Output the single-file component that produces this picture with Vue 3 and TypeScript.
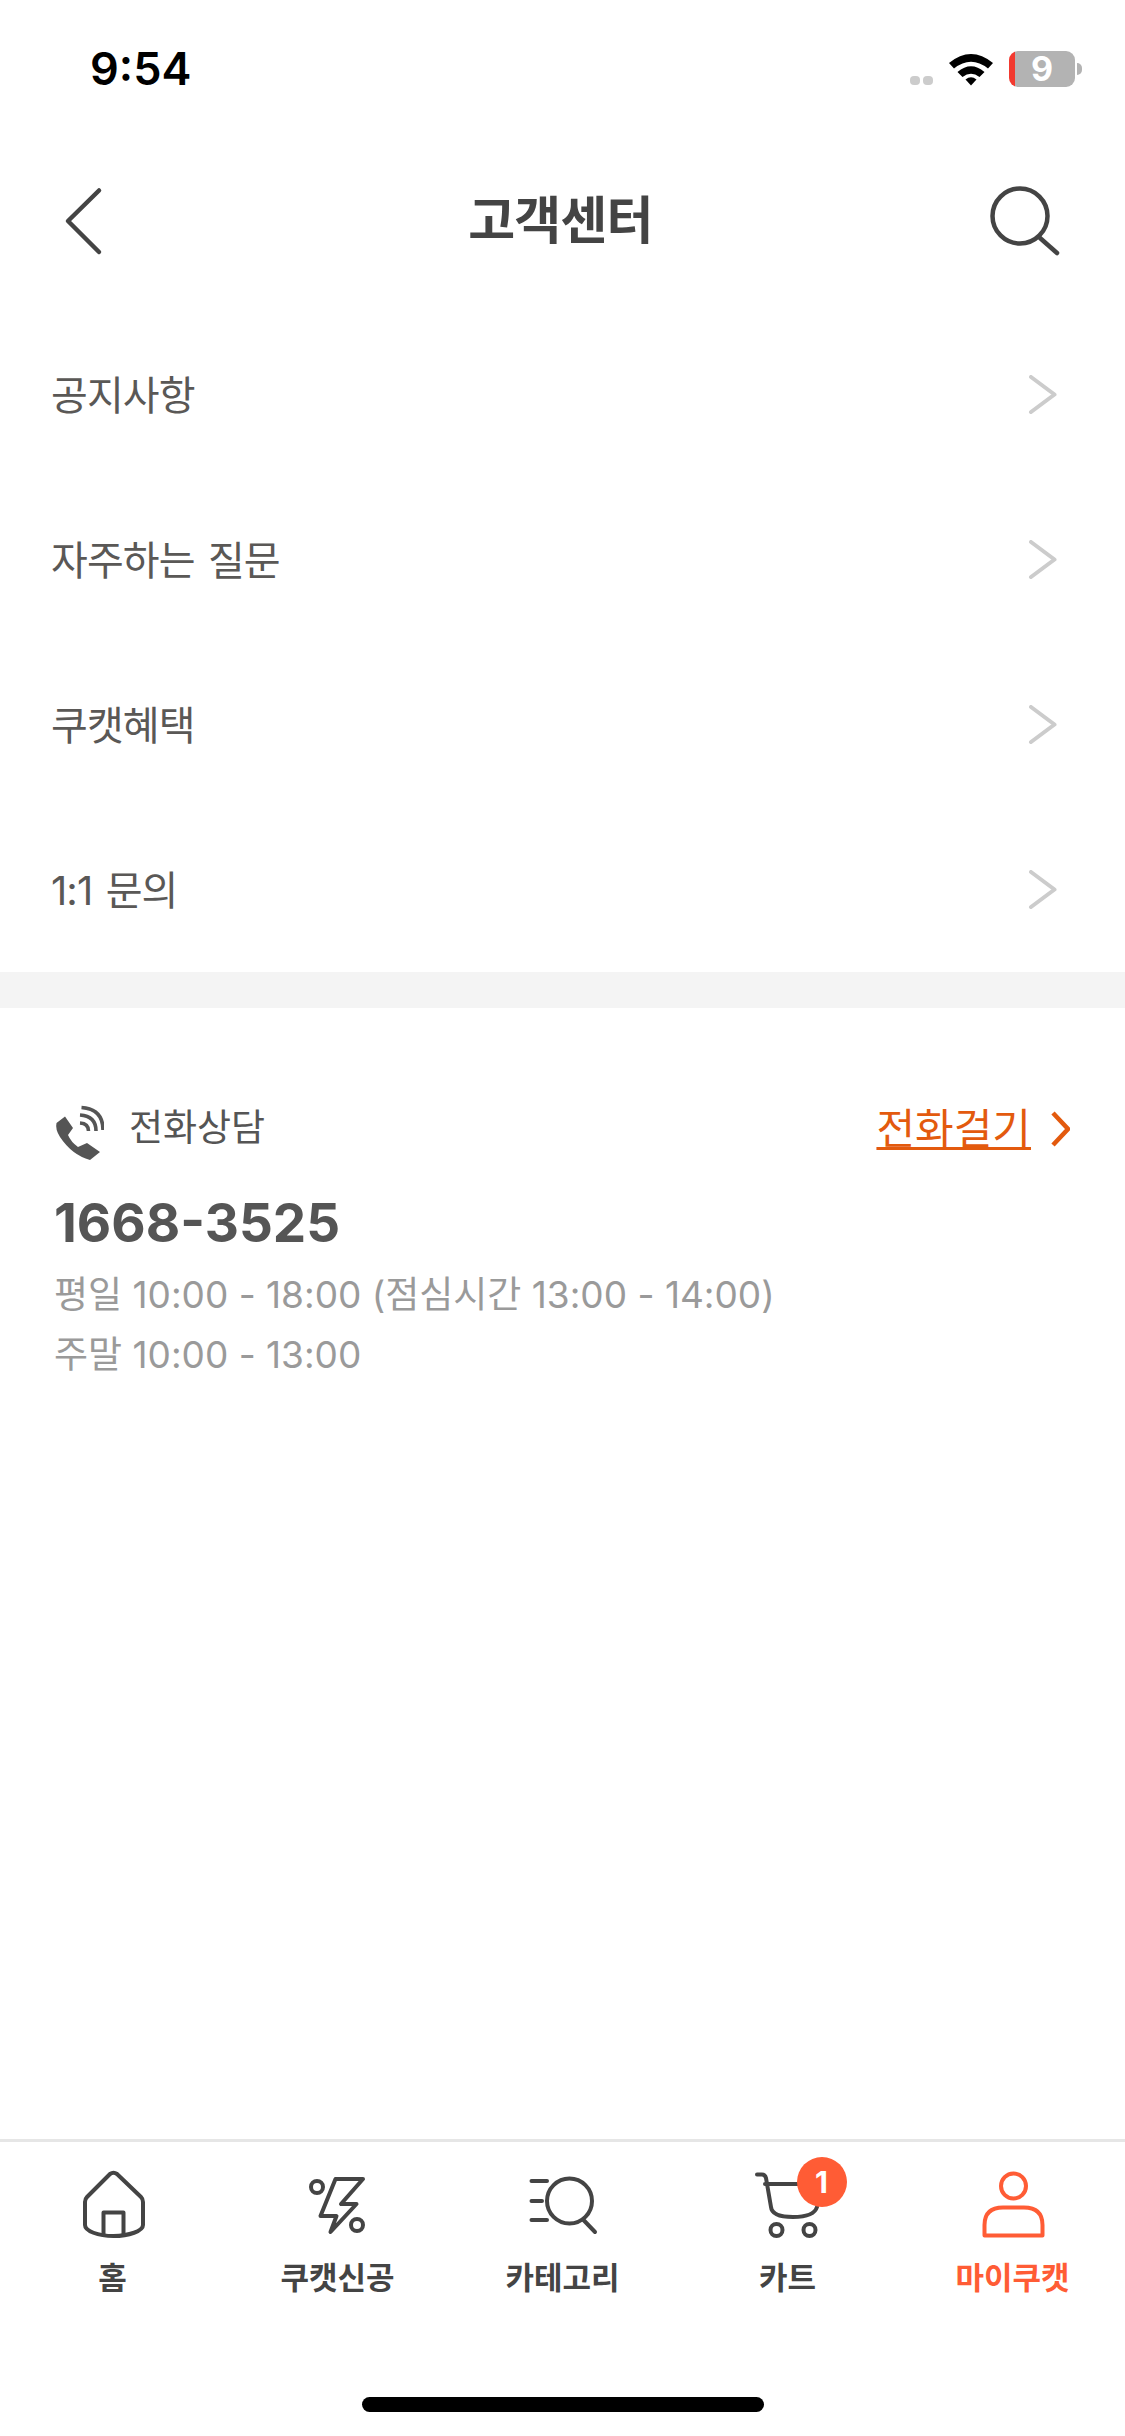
<template>
  <div class="screen">
    <div class="status">
      <span class="clock">9:54</span>
      <div class="status-icons">
        <div class="dots"><i></i><i></i></div>
        <svg class="wifi" width="46" height="34" viewBox="0 0 46 34">
          <path d="M1 11 Q23 -7 45 11 L40 16.5 Q23 3 6 16.5Z" fill="#000" />
          <path d="M9.5 20 Q23 8.5 36.5 20 L31.5 25 Q23 18.5 14.5 25Z" fill="#000" />
          <path d="M17.5 27.5 Q23 23 28.5 27.5 L23 33.5Z" fill="#000" />
        </svg>
        <div class="battery">9</div>
        <span class="battery-cap"></span>
      </div>
    </div>

    <header class="nav">
      <svg class="back" width="40" height="70" viewBox="0 0 40 70">
        <path d="M35 4.5 L4 35 L35 66" class="line" />
      </svg>
      <h1>고객센터</h1>
      <svg class="search" width="76" height="76" viewBox="0 0 76 76">
        <circle cx="33" cy="33" r="27.5" class="line" />
        <path d="M53 55 L70 70" class="line" />
      </svg>
    </header>

    <ul class="menu">
      <li v-for="item in menu" :key="item">
        <span>{{ item }}</span>
        <svg width="30" height="40" viewBox="0 0 30 40">
          <path d="M3 2 L26.5 19.5 L3 37" />
        </svg>
      </li>
    </ul>

    <div class="band"></div>

    <section class="call">
      <div class="call-head">
        <div class="call-title">
          <svg width="50" height="55" viewBox="14 15 50 55">
            <path d="M16.5 33 L25 26.5 L33 38 L28 45 Q31 52 38 57 L47 53 L60 62 L50 70 Q32 65 20 47 Q15 39 16.5 33Z" fill="#555" />
            <path d="M40 33 Q48.5 33.5 48.5 41 M40 25 Q56 26 56 41 M41.5 17.5 Q63 19 63 40" fill="none" stroke="#555" stroke-width="3.6" />
          </svg>
          <span>전화상담</span>
        </div>
        <a class="call-link">
          <span>전화걸기</span>
          <svg width="22" height="36" viewBox="0 0 22 36">
            <path d="M5 2 L20 18 L5 34" />
          </svg>
        </a>
      </div>
      <div class="number">1668-3525</div>
      <p class="hours first">평일 10:00 - 18:00 (점심시간 13:00 - 14:00)</p>
      <p class="hours">주말 10:00 - 13:00</p>
    </section>

    <nav class="tabs">
      <div v-for="tab in tabs" :key="tab.name" class="tab" :class="{ active: tab.active }">
        <div class="tab-icon">
          <svg width="80" height="80" viewBox="0 0 80 80">
            <template v-if="tab.name === '홈'">
              <path d="M37 9 Q40.5 6.5 44 9 L68 32 Q70 34 70 37 V60 C70 66 56 71 40.5 71 C25 71 12 66 12 60 V37 Q12 34 14 32 Z" />
              <path d="M30.5 70 V47.5 H50.5 V70" />
            </template>
            <template v-else-if="tab.name === '쿠캣신공'">
              <circle cx="19" cy="22" r="6" />
              <circle cx="59" cy="60" r="6" />
              <path d="M37.5 14 H65 L43 39 H58.5 L32.5 67 L38.5 51 H22.5 Z" />
            </template>
            <template v-else-if="tab.name === '카테고리'">
              <circle cx="46.5" cy="36" r="22.5" />
              <path d="M60.5 55 L72 67 M8.5 16 H24 M8.5 36 H19 M8.5 55 H24" />
            </template>
            <template v-else-if="tab.name === '카트'">
              <path d="M9 9.5 H14 Q17 9.5 18 13 L23 42 Q24 52 45 52 Q66 52 69 42 M17 19 H55" />
              <circle cx="28.5" cy="65" r="6" />
              <circle cx="61.5" cy="65" r="6" />
            </template>
            <template v-else>
              <circle cx="40.5" cy="21" r="12.5" />
              <path d="M11.5 70.5 V60 Q11.5 42.5 30 42.5 H51 Q69.5 42.5 69.5 60 V70.5 Z" />
            </template>
          </svg>
          <span v-if="tab.badge" class="badge">{{ tab.badge }}</span>
        </div>
        <span class="tab-name">{{ tab.name }}</span>
      </div>
      <div class="home-bar"></div>
    </nav>
  </div>
</template>

<script setup lang="ts">
interface Tab {
  name: string;
  badge?: number;
  active?: boolean;
}

const menu: string[] = ['공지사항', '자주하는 질문', '쿠캣혜택', '1:1 문의'];

const tabs: Tab[] = [
  { name: '홈' },
  { name: '쿠캣신공' },
  { name: '카테고리' },
  { name: '카트', badge: 1 },
  { name: '마이쿠캣', active: true },
];
</script>

<style scoped>
.screen {
  position: relative;
  display: flex;
  flex-direction: column;
  width: 1125px;
  height: 2436px;
  overflow: hidden;
  background: #fff;
  font-family: Inter, "Noto Sans CJK KR", sans-serif;
}
.status {
  display: flex;
  justify-content: space-between;
  height: 130px;
  padding: 42px 43px 0 90px;
  box-sizing: border-box;
}
.clock {
  font-size: 45px;
  font-weight: 600;
  line-height: 54px;
  color: #000;
}
.status-icons {
  display: flex;
  align-items: flex-start;
  height: 40px;
  margin-top: 9px;
}
.dots {
  display: flex;
  gap: 3px;
  margin-top: 25px;
  margin-right: 15px;
}
.dots i {
  width: 10px;
  height: 9px;
  border-radius: 4px;
  background: #ccc;
}
.wifi {
  margin-top: 1px;
  margin-right: 15px;
}
.battery {
  width: 66px;
  height: 36px;
  border-radius: 9px;
  background: linear-gradient(90deg, #f23a30 6px, #b3b3b3 6px);
  font-size: 34px;
  font-weight: 700;
  line-height: 36px;
  text-align: center;
  color: #fff;
}
.battery-cap {
  width: 5px;
  height: 12px;
  margin-top: 12px;
  margin-left: 2px;
  border-radius: 0 6px 6px 0;
  background: #b3b3b3;
}
.nav {
  display: grid;
  grid-template-columns: 1fr auto 1fr;
  align-items: center;
  height: 182px;
  padding: 0 68px 0 64px;
}
.search {
  justify-self: end;
  margin-right: -6px;
}
.line {
  fill: none;
  stroke: #444;
  stroke-width: 4.5;
  stroke-linecap: round;
  stroke-linejoin: round;
}
h1 {
  margin: 0;
  font-size: 51px;
  font-weight: 700;
  line-height: 60px;
  color: #444;
  letter-spacing: -0.8px;
}
.menu {
  margin: 0;
  padding: 0;
  list-style: none;
}
.menu li {
  display: flex;
  align-items: center;
  justify-content: space-between;
  height: 165px;
  padding: 0 67px 0 51px;
  font-size: 40px;
  letter-spacing: -0.9px;
  word-spacing: 3px;
  color: #5a5856;
}
.menu li span {
  margin-bottom: 3px;
}
.menu svg path {
  fill: none;
  stroke: #ccc;
  stroke-width: 4;
  stroke-linecap: round;
  stroke-linejoin: round;
}
.band {
  height: 36px;
  background: #f4f4f4;
}
.call {
  padding: 97px 55px 0 54px;
}
.call-head {
  display: flex;
  align-items: flex-start;
  justify-content: space-between;
  height: 55px;
  margin-bottom: 33px;
}
.call-title {
  display: flex;
  align-items: center;
  gap: 25px;
  font-size: 37px;
  color: #555;
}
.call-title span {
  line-height: 42px;
  margin-bottom: 10px;
}
.call-link {
  display: flex;
  align-items: center;
  gap: 17px;
  height: 42px;
  margin-top: 3px;
  font-size: 42px;
  line-height: 42px;
  color: #e35a0e;
}
.call-link span {
  text-decoration: underline;
  text-decoration-thickness: 3px;
  text-underline-offset: 3px;
  text-decoration-skip-ink: none;
}
.call-link svg path {
  fill: none;
  stroke: #e35a0e;
  stroke-width: 4.5;
}
.number {
  font-size: 53px;
  font-weight: 700;
  line-height: 60px;
  color: #555;
}
.hours {
  margin: 0;
  font-size: 37px;
  line-height: 60px;
  color: #9a9a9a;
}
.first {
  margin-top: 12px;
}
.tabs {
  position: relative;
  display: grid;
  grid-template-columns: repeat(5, 1fr);
  height: 297px;
  margin-top: auto;
  box-sizing: border-box;
  padding-top: 23px;
  border-top: 3px solid #e6e6e6;
}
.tab {
  display: flex;
  flex-direction: column;
  align-items: center;
  color: #444;
}
.tab-icon {
  position: relative;
  width: 80px;
  height: 80px;
}
.tab-icon svg {
  display: block;
  fill: none;
  stroke: #444;
  stroke-width: 4;
  stroke-linecap: round;
  stroke-linejoin: round;
}
.active {
  color: #ff5c35;
}
.active .tab-icon svg {
  stroke: #ff5c35;
}
.tab-name {
  margin-top: 11px;
  font-size: 31px;
  font-weight: 700;
  line-height: 44px;
}
.badge {
  position: absolute;
  left: 49px;
  top: -8px;
  width: 50px;
  height: 50px;
  border-radius: 50%;
  background: #ff5c35;
  color: #fff;
  font-size: 30px;
  font-weight: 700;
  line-height: 50px;
  text-align: center;
}
.home-bar {
  position: absolute;
  left: 362px;
  bottom: 24px;
  width: 402px;
  height: 15px;
  border-radius: 8px;
  background: #000;
}
</style>
